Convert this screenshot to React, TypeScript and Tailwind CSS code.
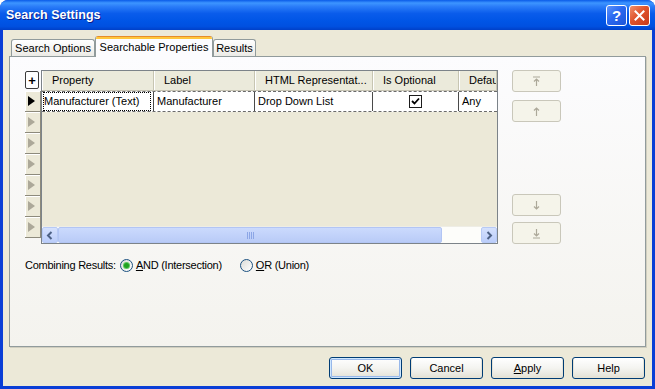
import type { ReactNode } from 'react'

const columns = [
  { label: 'Property', width: 'w-[112px]', value: 'Manufacturer (Text)' },
  { label: 'Label', width: 'w-[101px]', value: 'Manufacturer' },
  { label: 'HTML Representat...', width: 'w-[118px]', value: 'Drop Down List' },
  { label: 'Is Optional', width: 'w-[86px]', value: 'check' },
  { label: 'Defau', width: 'flex-1', value: 'Any' },
]

function TitleBar() {
  return (
    <div className="h-[30px] shrink-0 flex items-center justify-between pl-[6px] pr-[5px] bg-[linear-gradient(180deg,#0a5be8_0%,#3d95ff_10%,#2a7cf8_22%,#0a5ceb_45%,#0055e6_70%,#0050e0_88%,#0040c8_100%)]">
      <span className="text-white font-bold text-[12.5px] [text-shadow:1px_1px_0_#0a1e8c]">
        Search Settings
      </span>
      <div className="flex gap-[2px]">
        <div className="w-[21px] h-[21px] rounded-[3px] border border-white flex items-center justify-center bg-[linear-gradient(135deg,#5d93fb_0%,#2a68f0_45%,#1d55d8_100%)] text-white font-bold text-[15px] leading-none">
          ?
        </div>
        <div className="w-[21px] h-[21px] rounded-[3px] border border-white flex items-center justify-center bg-[linear-gradient(135deg,#f0906c_0%,#e0542c_45%,#c8391a_100%)]">
          <svg width="11" height="11" viewBox="0 0 11 11">
            <path d="M1.5 1.5 L9.5 9.5 M9.5 1.5 L1.5 9.5" stroke="white" strokeWidth="2" strokeLinecap="square" />
          </svg>
        </div>
      </div>
    </div>
  )
}

function Tabs() {
  return (
    <div className="h-[20px] flex items-start pl-[2px]">
      <div className="mt-[3px] h-[17px] w-[84px] rounded-t-[3px] border border-b-0 border-[#919b9c] bg-linear-to-b from-white to-[#ecebe6] flex items-center justify-center">
        Search Options
      </div>
      <div className="relative z-10 h-[21px] w-[118px] rounded-t-[3px] overflow-hidden border-x border-[#919b9c] bg-[#fcfcfe] flex flex-col">
        <div className="h-[1px] bg-[#e68b2c]" />
        <div className="h-[2px] bg-[#ffc73c]" />
        <div className="flex-1 flex items-start justify-center">Searchable Properties</div>
      </div>
      <div className="mt-[3px] h-[17px] w-[43px] rounded-t-[3px] border border-b-0 border-[#919b9c] bg-linear-to-b from-white to-[#ecebe6] flex items-center justify-center">
        Results
      </div>
    </div>
  )
}

function Triangle({ color }: { color: string }) {
  return (
    <svg width="7" height="10" viewBox="0 0 7 10">
      <path d="M0 0 L7 5 L0 10 Z" fill={color} />
    </svg>
  )
}

function RowHeaders() {
  return (
    <div className="w-[16px] flex flex-col">
      <div className="mt-[1px] w-[14px] h-[18px] border border-[#3b3b3b] rounded-[2px] bg-white flex items-center justify-center font-bold text-[13px] leading-none">
        +
      </div>
      <div className="mt-[2px] flex flex-col">
        {[0, 1, 2, 3, 4, 5, 6].map((i) => (
          <div
            key={i}
            className="h-[21px] w-[16px] flex items-center pl-[3px] bg-[#ece9d8] border-b border-r border-[#8d8a7c] shadow-[inset_1px_1px_0_#ffffff]"
          >
            <Triangle color={i === 0 ? '#000000' : '#aca899'} />
          </div>
        ))}
      </div>
    </div>
  )
}

function Checkbox() {
  return (
    <div className="w-[13px] h-[13px] border border-[#1c1c1c] bg-white flex items-center justify-center">
      <svg width="9" height="9" viewBox="0 0 9 9">
        <path d="M1 4 L3.5 6.5 L8 1.5" stroke="#000" strokeWidth="1.8" fill="none" />
      </svg>
    </div>
  )
}

function Chevron({ dir }: { dir: 'left' | 'right' }) {
  return (
    <svg width="8" height="9" viewBox="0 0 8 9">
      <path
        d={dir === 'left' ? 'M5.5 1 L2 4.5 L5.5 8' : 'M2.5 1 L6 4.5 L2.5 8'}
        stroke="#4d6185"
        strokeWidth="2"
        fill="none"
      />
    </svg>
  )
}

function ScrollBar() {
  return (
    <div className="h-[17px] shrink-0 flex bg-[#fdfdfa] border-t border-[#eeede5]">
      <div className="w-[16px] rounded-[2px] border border-[#b7caf5] bg-linear-to-b from-[#d5e1fd] to-[#bbcdfa] flex items-center justify-center">
        <Chevron dir="left" />
      </div>
      <div className="w-[384px] rounded-[2px] border border-[#b2c5f4] bg-linear-to-b from-[#cbdafd] to-[#b9cbf7] flex items-center justify-center">
        <div className="flex gap-[1px]">
          {[0, 1, 2, 3].map((i) => (
            <div key={i} className="w-[1px] h-[7px] bg-[#8ca6e6]" />
          ))}
        </div>
      </div>
      <div className="flex-1" />
      <div className="w-[16px] rounded-[2px] border border-[#b7caf5] bg-linear-to-b from-[#d5e1fd] to-[#bbcdfa] flex items-center justify-center">
        <Chevron dir="right" />
      </div>
    </div>
  )
}

function Grid() {
  return (
    <div className="w-[457px] h-[174px] border border-[#7c8389] bg-[#ece9d8] flex flex-col overflow-hidden">
      <div className="h-[20px] shrink-0 flex bg-[#ebeadb] border-b border-[#c5c2b2]">
        {columns.map((c) => (
          <div
            key={c.label}
            className={`${c.width} shrink-0 h-full flex items-center pl-[10px] whitespace-nowrap overflow-hidden border-r border-[#c7c5b2] shadow-[inset_1px_0_0_#ffffff]`}
          >
            {c.label}
          </div>
        ))}
      </div>
      <div className="h-[21px] shrink-0 flex bg-white border-y border-dashed border-[#6a6a6a]">
        {columns.map((c, i) => (
          <div
            key={c.label}
            className={`${c.width} shrink-0 h-full flex items-center whitespace-nowrap overflow-hidden ${
              i < columns.length - 1 ? 'border-r border-[#4a4a4a]' : ''
            } ${c.value === 'check' ? 'justify-center' : 'pl-[3px]'}`}
          >
            {c.value === 'check' ? (
              <Checkbox />
            ) : i === 0 ? (
              <span className="outline-1 outline-dotted outline-black -outline-offset-1 h-full flex items-center w-full pl-[1px] -ml-[2px]">
                {c.value}
              </span>
            ) : (
              c.value
            )}
          </div>
        ))}
      </div>
      <div className="flex-1" />
      <ScrollBar />
    </div>
  )
}

function MoveIcon({ kind }: { kind: 'top' | 'up' | 'down' | 'bottom' }) {
  const paths: Record<string, string> = {
    top: 'M1 1 H8 M4.5 3 V10 M2 5.5 L4.5 3 L7 5.5',
    up: 'M4.5 2 V10 M2 4.5 L4.5 2 L7 4.5',
    down: 'M4.5 1 V9 M2 6.5 L4.5 9 L7 6.5',
    bottom: 'M1 10 H8 M4.5 1 V8 M2 5.5 L4.5 8 L7 5.5',
  }
  return (
    <svg width="9" height="11" viewBox="0 0 9 11">
      <path d={paths[kind]} stroke="#aca899" strokeWidth="1.2" fill="none" />
    </svg>
  )
}

function SideButton({ kind, className = '' }: { kind: 'top' | 'up' | 'down' | 'bottom'; className?: string }) {
  return (
    <div
      className={`w-[49px] h-[22px] rounded-[3px] border border-[#c9c7ba] bg-[#f5f4ea] flex items-center justify-center ${className}`}
    >
      <MoveIcon kind={kind} />
    </div>
  )
}

function Radio({ checked }: { checked: boolean }) {
  return (
    <div className="w-[13px] h-[13px] rounded-full border border-[#1c5180] bg-linear-to-br from-[#dcdcd7] to-white flex items-center justify-center">
      {checked ? <div className="w-[5px] h-[5px] rounded-full bg-[#21a121] shadow-[0_0_0_1px_#5ec85e]" /> : null}
    </div>
  )
}

function DialogButton({ children, isDefault = false }: { children: ReactNode; isDefault?: boolean }) {
  return (
    <div
      className={`w-[73px] h-[22px] rounded-[3px] border border-[#003c74] bg-linear-to-b from-white via-[#f4f4f0] to-[#e3e1d6] flex items-center justify-center ${
        isDefault ? 'shadow-[inset_0_0_0_1px_#cee7ff,inset_0_0_0_2px_#98b8ea]' : 'shadow-[inset_0_-1px_0_1px_#e6e3d6]'
      }`}
    >
      {children}
    </div>
  )
}

export default function App() {
  return (
    <div className="w-[655px] h-[389px] flex flex-col bg-[#0a3ed6] rounded-t-[8px] overflow-hidden font-['Liberation_Sans',Arial,sans-serif] text-[11px] text-black">
      <TitleBar />
      <div className="flex-1 mx-[3px] mb-[3px] bg-[#ece9d8] flex flex-col">
        <div className="mx-[6px] mt-[6px] flex flex-col">
          <Tabs />
          <div className="h-[291px] border border-[#919b9c] bg-linear-to-b from-[#fcfcfe] to-[#f4f3ee] shadow-[1px_1px_0_#d0cebf] pt-[13px] pl-[15px] flex flex-col">
            <div className="flex items-start">
              <RowHeaders />
              <Grid />
              <div className="ml-[14px] h-[174px] flex flex-col">
                <SideButton kind="top" />
                <SideButton kind="up" className="mt-[8px]" />
                <div className="flex-1" />
                <SideButton kind="down" />
                <SideButton kind="bottom" className="mt-[6px]" />
              </div>
            </div>
            <div className="mt-[14px] flex items-center h-[14px] tracking-[-0.25px]">
              <span>Combining Results:</span>
              <div className="ml-[4px]">
                <Radio checked />
              </div>
              <span className="ml-[3px]">
                <span className="underline">A</span>ND (Intersection)
              </span>
              <div className="ml-[18px]">
                <Radio checked={false} />
              </div>
              <span className="ml-[3px]">
                <span className="underline">O</span>R (Union)
              </span>
            </div>
          </div>
        </div>
        <div className="mt-[10px] flex justify-end gap-[8px] pr-[7px]">
          <DialogButton isDefault>OK</DialogButton>
          <DialogButton>Cancel</DialogButton>
          <DialogButton>
            <span>
              <span className="underline">A</span>pply
            </span>
          </DialogButton>
          <DialogButton>Help</DialogButton>
        </div>
      </div>
    </div>
  )
}
